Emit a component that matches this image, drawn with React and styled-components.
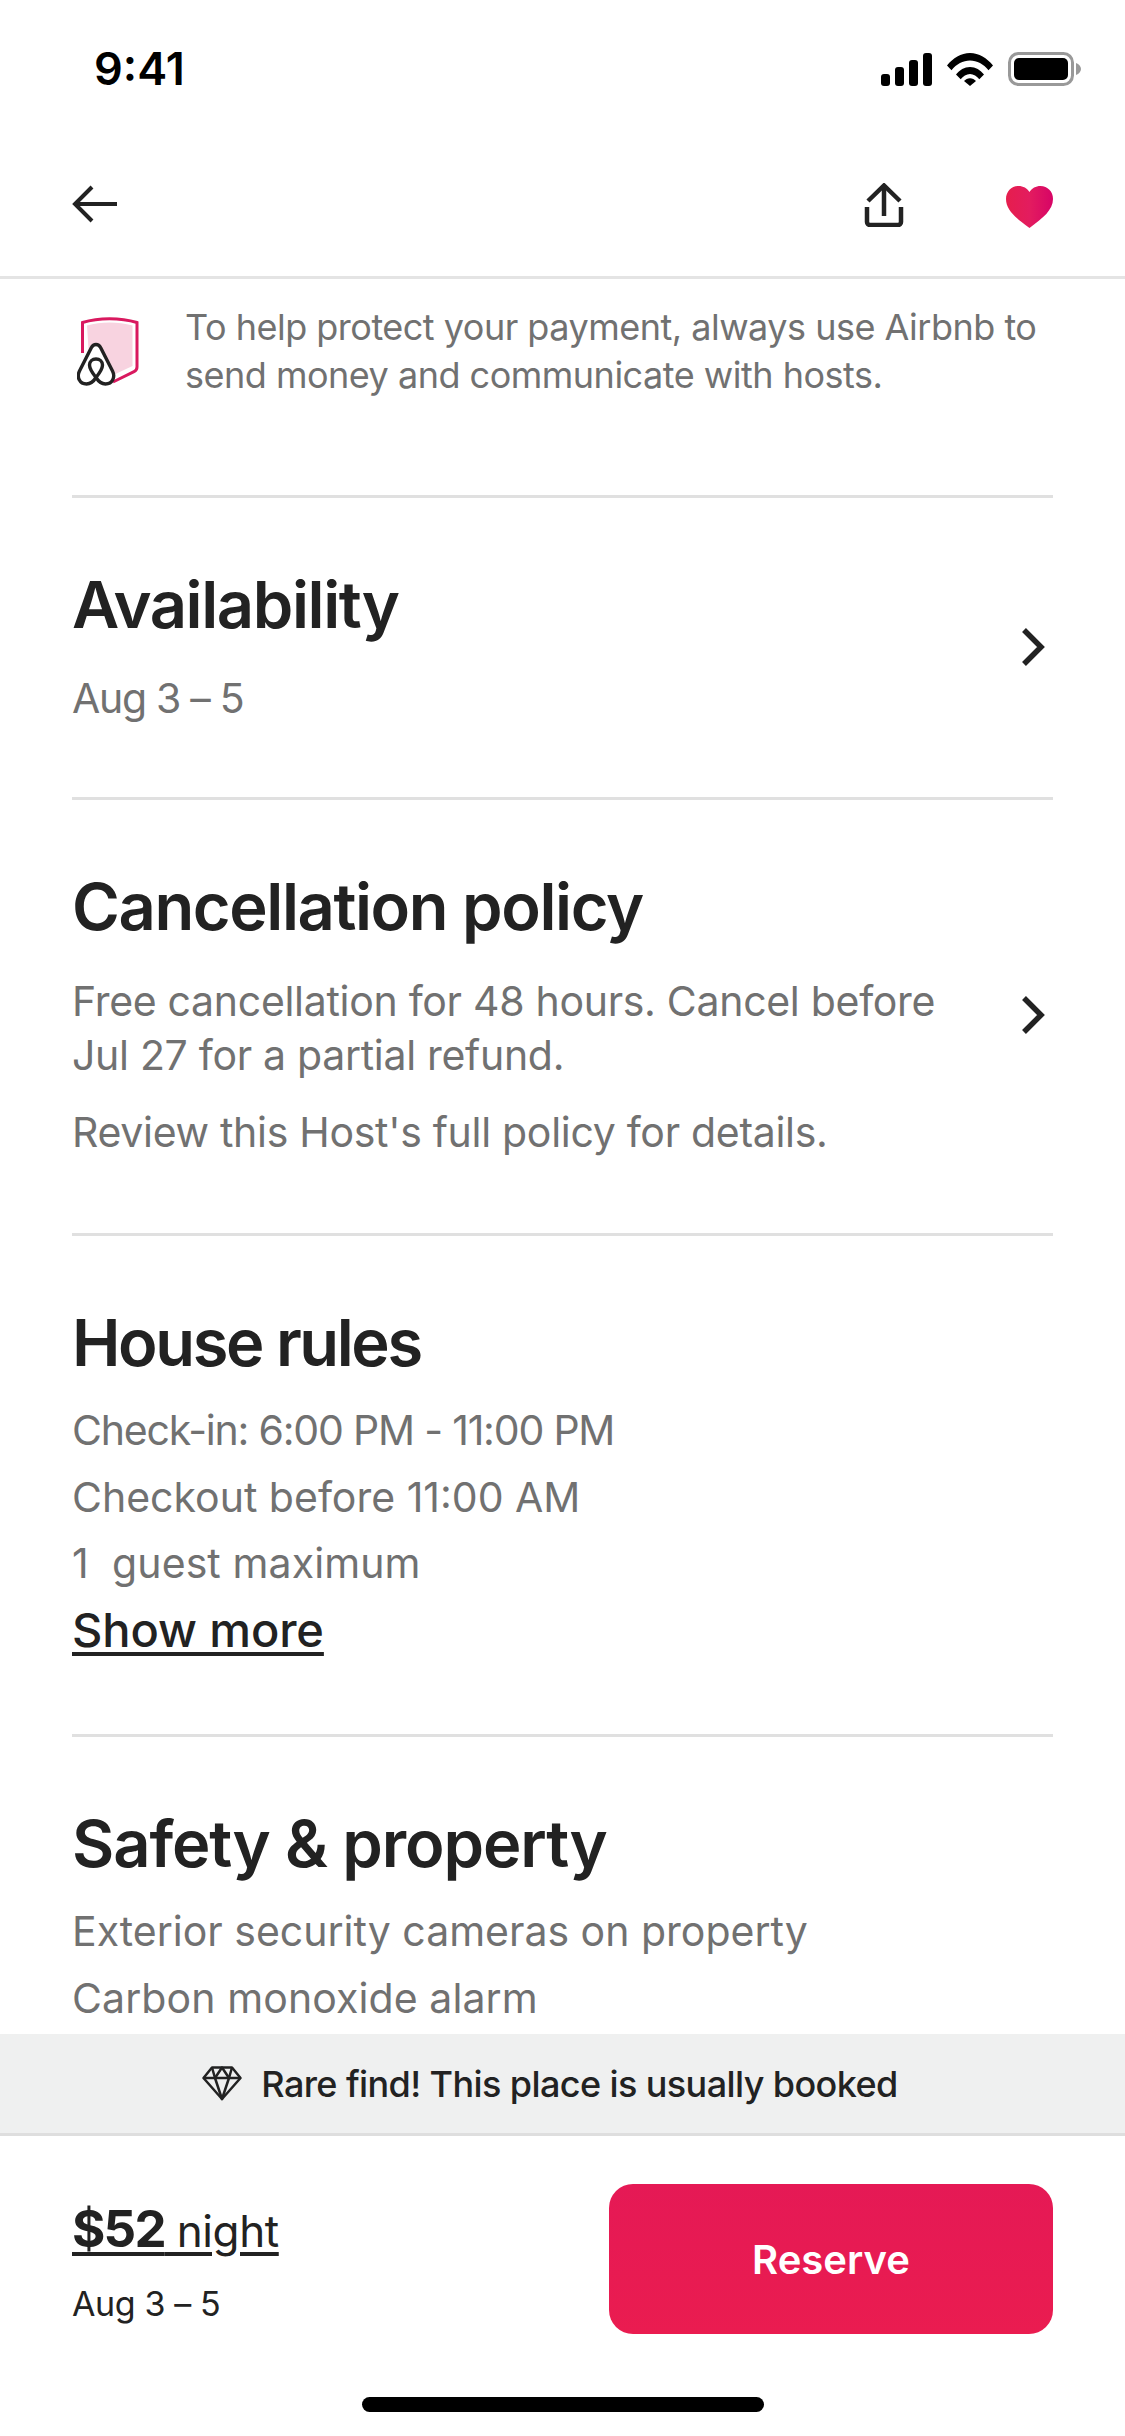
import React from 'react';
import styled, { createGlobalStyle } from 'styled-components';

const GlobalStyle = createGlobalStyle`
  html, body {
    margin: 0;
    padding: 0;
    background: #fff;
  }
  * {
    box-sizing: border-box;
  }
`;

const Screen = styled.div`
  width: 1125px;
  height: 2436px;
  display: flex;
  flex-direction: column;
  overflow: hidden;
  background: #fff;
  font-family: Inter, "Liberation Sans", sans-serif;
  color: #222;
`;

const StatusBar = styled.div`
  height: 136px;
  flex-shrink: 0;
  display: flex;
  justify-content: space-between;
  align-items: flex-start;
  padding: 45px 43px 0 94px;
`;

const Time = styled.div`
  font-size: 45px;
  line-height: 48px;
  font-weight: 600;
  color: #000;
`;

const StatusIcons = styled.div`
  display: flex;
  align-items: center;
  gap: 15px;
  margin-top: 7px;
`;

const NavBar = styled.div`
  height: 143px;
  flex-shrink: 0;
  display: flex;
  align-items: center;
  justify-content: space-between;
  padding: 0 72px 2px 72px;
  border-bottom: 3px solid #e4e4e4;
`;

const NavActions = styled.div`
  display: flex;
  align-items: flex-start;
  gap: 102px;
`;

const BackSvg = styled.svg`
  margin-bottom: 2px;
`;

const ShareSvg = styled.svg`
  margin-top: 1px;
`;

const HeartSvg = styled.svg`
  margin-top: 4px;
`;

const Content = styled.div`
  flex: 1;
  min-height: 0;
  overflow: hidden;
  padding: 24px 72px 0;
`;

const Notice = styled.div`
  display: flex;
  align-items: flex-start;
  gap: 46px;
  height: 192px;
  padding: 14px 0 0 5px;
`;

const NoticeText = styled.div`
  margin-top: -14px;
  font-size: 36px;
  line-height: 48px;
  color: #717171;
  letter-spacing: -0.5px;
`;

const Section = styled.section`
  display: flex;
  align-items: center;
  justify-content: space-between;
  border-top: 3px solid #e0e0e0;
  padding: 67px 0 ${(p) => p.$bottom}px;
`;

const SectionBody = styled.div`
  flex: 1;
  min-width: 0;
`;

const Heading = styled.h2`
  margin: 0;
  font-size: 65px;
  line-height: 80px;
  font-weight: 600;
  letter-spacing: ${(p) => p.$tracking ?? -1.4}px;
  color: #222;
`;

const Paragraph = styled.p`
  margin: ${(p) => p.$top}px 0 0;
  font-size: 41px;
  line-height: 54px;
  color: #717171;
  letter-spacing: ${(p) => p.$tracking ?? -0.3}px;
`;

const RuleList = styled.div`
  margin-top: 14px;
`;

const Rule = styled.div`
  font-size: 41px;
  line-height: 66.7px;
  color: #717171;
  letter-spacing: ${(p) => p.$tracking ?? 0}px;
  white-space: pre;
`;

const ShowMore = styled.a`
  display: block;
  font-size: 47px;
  line-height: 66.7px;
  font-weight: 500;
  color: #222;
  text-decoration: underline;
  text-decoration-thickness: 4px;
  text-underline-offset: 5px;
  letter-spacing: -0.1px;
`;

const Chevron = styled.svg`
  flex-shrink: 0;
  width: 30px;
  height: 40px;
  margin: 3px 6px 0 0;
`;

const RareBanner = styled.div`
  height: 102px;
  flex-shrink: 0;
  display: flex;
  align-items: center;
  justify-content: center;
  gap: 19px;
  padding-right: 25px;
  background: #eff0f0;
  border-bottom: 3px solid #dedede;
  font-size: 36px;
  font-weight: 500;
  letter-spacing: -0.6px;
  color: #222;
`;

const Footer = styled.div`
  height: 300px;
  flex-shrink: 0;
  display: flex;
  flex-direction: column;
`;

const FooterRow = styled.div`
  display: flex;
  align-items: flex-start;
  justify-content: space-between;
  padding: 48px 72px 0;
`;

const PriceBlock = styled.div`
  padding-top: 14px;
`;

const Price = styled.div`
  font-size: 44px;
  line-height: 62px;
  color: #222;
  text-decoration: underline;
  text-decoration-thickness: 4px;
  text-underline-offset: 5px;
  letter-spacing: -0.4px;
  white-space: pre;
`;

const PriceAmount = styled.span`
  font-size: 51px;
  font-weight: 700;
  letter-spacing: -1.8px;
`;

const PriceDates = styled.div`
  margin-top: 18px;
  font-size: 34px;
  line-height: 48px;
  color: #222;
  letter-spacing: -0.4px;
`;

const ReserveButton = styled.button`
  width: 444px;
  height: 150px;
  border: 0;
  border-radius: 24px;
  background: linear-gradient(180deg, #e51955, #ea1c50);
  color: #fff;
  font-family: inherit;
  font-size: 40px;
  font-weight: 600;
`;

const HomeIndicator = styled.div`
  width: 402px;
  height: 15px;
  margin: 63px auto 0;
  border-radius: 8px;
  background: #000;
`;

const SignalIcon = () => (
  <svg width="51" height="33" viewBox="0 0 51 33" fill="#000">
    <rect x="0" y="21" width="9" height="12" rx="3" />
    <rect x="14" y="14" width="9" height="19" rx="3" />
    <rect x="28" y="7" width="9" height="26" rx="3" />
    <rect x="42" y="0" width="9" height="33" rx="3" />
  </svg>
);

const WifiIcon = () => (
  <svg width="46" height="33" viewBox="0 0 46 33" fill="#000">
    <path d="M0 12.5C6 5 14 0 23 0s17 5 23 12.5l-4.500 4.700C36.500 11 30 7.500 23 7.500S9.500 11 4.500 17.200z" />
    <path d="M9 21.500C12.500 17 17.500 14 23 14s10.500 3 14 7.500l-4.700 4.800C30 23.200 26.500 21 23 21s-7 2.200-9.300 5.300z" />
    <path d="M17 28.500c1.500-1.700 3.700-2.800 6-2.800s4.500 1.100 6 2.800L23 33.500z" transform="translate(0 -.5)" />
  </svg>
);

const BatteryIcon = () => (
  <svg width="74" height="34" viewBox="0 0 74 34">
    <rect x="1.500" y="1.500" width="63" height="31" rx="9" fill="none" stroke="#999" strokeWidth="3" />
    <rect x="6" y="6" width="54" height="22" rx="5" fill="#000" />
    <path d="M68 11c3 1 5 3.500 5 6s-2 5-5 6z" fill="#999" />
  </svg>
);

const BackIcon = () => (
  <BackSvg width="46" height="38" viewBox="0 0 46 38" fill="none" stroke="#222" strokeWidth="4">
    <path d="M45 19H3" />
    <path d="M20 2L3 19l17 17" />
  </BackSvg>
);

const ShareIcon = () => (
  <ShareSvg width="40" height="44" viewBox="0 0 40 44" fill="none" stroke="#222" strokeWidth="4.500">
    <path d="M20 33V3" />
    <path d="M4 18L20 2.500 36 18" />
    <path d="M3 24v15a3 3 0 0 0 3 3h28a3 3 0 0 0 3-3V24" />
  </ShareSvg>
);

const HeartIcon = () => (
  <HeartSvg width="47" height="42" viewBox="0 0 47 42">
    <defs>
      <linearGradient id="heartFill" x1="0" x2="1" y1="0" y2="0">
        <stop offset="0" stopColor="#e61e4d" />
        <stop offset="0.5" stopColor="#e31c5f" />
        <stop offset="1" stopColor="#d70466" />
      </linearGradient>
    </defs>
    <path
      d="M23.500 42C10 32 0 24 0 13 0 5.500 5.500 0 12.500 0c4.700 0 8.700 2.300 11 6 2.300-3.700 6.300-6 11-6C41.500 0 47 5.500 47 13c0 11-10 19-23.500 29z"
      fill="url(#heartFill)"
    />
  </HeartSvg>
);

const ShieldIcon = () => (
  <svg width="62" height="70" viewBox="0 0 62 70">
    <path d="M10 8.500c14-4 31-4 45.500 0V49L32 60 12 40z" fill="#f8d3e0" />
    <path
      d="M5.500 36V5.500C22 .5 43 .5 60 5.500V50c0 2.500-1 3.700-3 4.600L36 65"
      fill="none"
      stroke="#d9195f"
      strokeWidth="3"
    />
    <path
      d="M19 27.500c-2 0-3.500 1-4.700 3.200L2.500 54C-.5 60 2.500 67 9.500 67c3.800 0 6.800-2.200 9.500-6.500 2.700 4.300 5.700 6.500 9.500 6.500 7 0 10-7 7-13L23.700 30.700C22.500 28.500 21 27.500 19 27.500z"
      fill="#fff"
      stroke="#222"
      strokeWidth="3.400"
      strokeLinejoin="round"
    />
    <path
      d="M19 60.500c-4-5-6.500-9-6.500-12.500 0-3.500 2.800-6 6.500-6s6.500 2.500 6.500 6c0 3.500-2.500 7.500-6.500 12.500z"
      fill="none"
      stroke="#222"
      strokeWidth="3.400"
    />
  </svg>
);

const ChevronIcon = () => (
  <Chevron viewBox="0 0 30 40" fill="none" stroke="#222" strokeWidth="5.500">
    <path d="M7 3l17 17L7 37" />
  </Chevron>
);

const DiamondIcon = () => (
  <svg width="40" height="35" viewBox="0 0 40 35" fill="none" stroke="#222" strokeWidth="2.500" strokeLinejoin="round">
    <path d="M10 1.500h20l8.500 10.500L20 33 1.500 12z" />
    <path d="M1.500 12h37" />
    <path d="M10 1.500L13 12l7 21 7-21 3-10.500" />
    <path d="M13 12l7-10.500L27 12" />
  </svg>
);

export default function App() {
  return (
    <Screen>
      <GlobalStyle />
      <StatusBar>
        <Time>9:41</Time>
        <StatusIcons>
          <SignalIcon />
          <WifiIcon />
          <BatteryIcon />
        </StatusIcons>
      </StatusBar>
      <NavBar>
        <BackIcon />
        <NavActions>
          <ShareIcon />
          <HeartIcon />
        </NavActions>
      </NavBar>
      <Content>
        <Notice>
          <ShieldIcon />
          <NoticeText>
            To help protect your payment, always use Airbnb to
            <br />
            send money and communicate with hosts.
          </NoticeText>
        </Notice>
        <Section $bottom={72}>
          <SectionBody>
            <Heading>Availability</Heading>
            <Paragraph $top={26} $tracking={-1.3}>Aug 3 – 5</Paragraph>
          </SectionBody>
          <ChevronIcon />
        </Section>
        <Section $bottom={74}>
          <SectionBody>
            <Heading>Cancellation policy</Heading>
            <Paragraph $top={27}>
              Free cancellation for 48 hours. Cancel before
              <br />
              Jul 27 for a partial refund.
            </Paragraph>
            <Paragraph $top={23}>Review this Host's full policy for details.</Paragraph>
          </SectionBody>
          <ChevronIcon />
        </Section>
        <Section $bottom={70}>
          <SectionBody>
            <Heading $tracking={-2.4}>House rules</Heading>
            <RuleList>
              <Rule $tracking={-1.2}>Check-in: 6:00 PM - 11:00 PM</Rule>
              <Rule>Checkout before 11:00 AM</Rule>
              <Rule $tracking={0.1}>1  guest maximum</Rule>
              <ShowMore>Show more</ShowMore>
            </RuleList>
          </SectionBody>
        </Section>
        <Section $bottom={0}>
          <SectionBody>
            <Heading $tracking={-1.1}>Safety &amp; property</Heading>
            <RuleList>
              <Rule>Exterior security cameras on property</Rule>
              <Rule $tracking={0.1}>Carbon monoxide alarm</Rule>
            </RuleList>
          </SectionBody>
        </Section>
      </Content>
      <RareBanner>
        <DiamondIcon />
        Rare find! This place is usually booked
      </RareBanner>
      <Footer>
        <FooterRow>
          <PriceBlock>
            <Price>
              <PriceAmount>$52</PriceAmount> night
            </Price>
            <PriceDates>Aug 3 – 5</PriceDates>
          </PriceBlock>
          <ReserveButton>Reserve</ReserveButton>
        </FooterRow>
        <HomeIndicator />
      </Footer>
    </Screen>
  );
}
